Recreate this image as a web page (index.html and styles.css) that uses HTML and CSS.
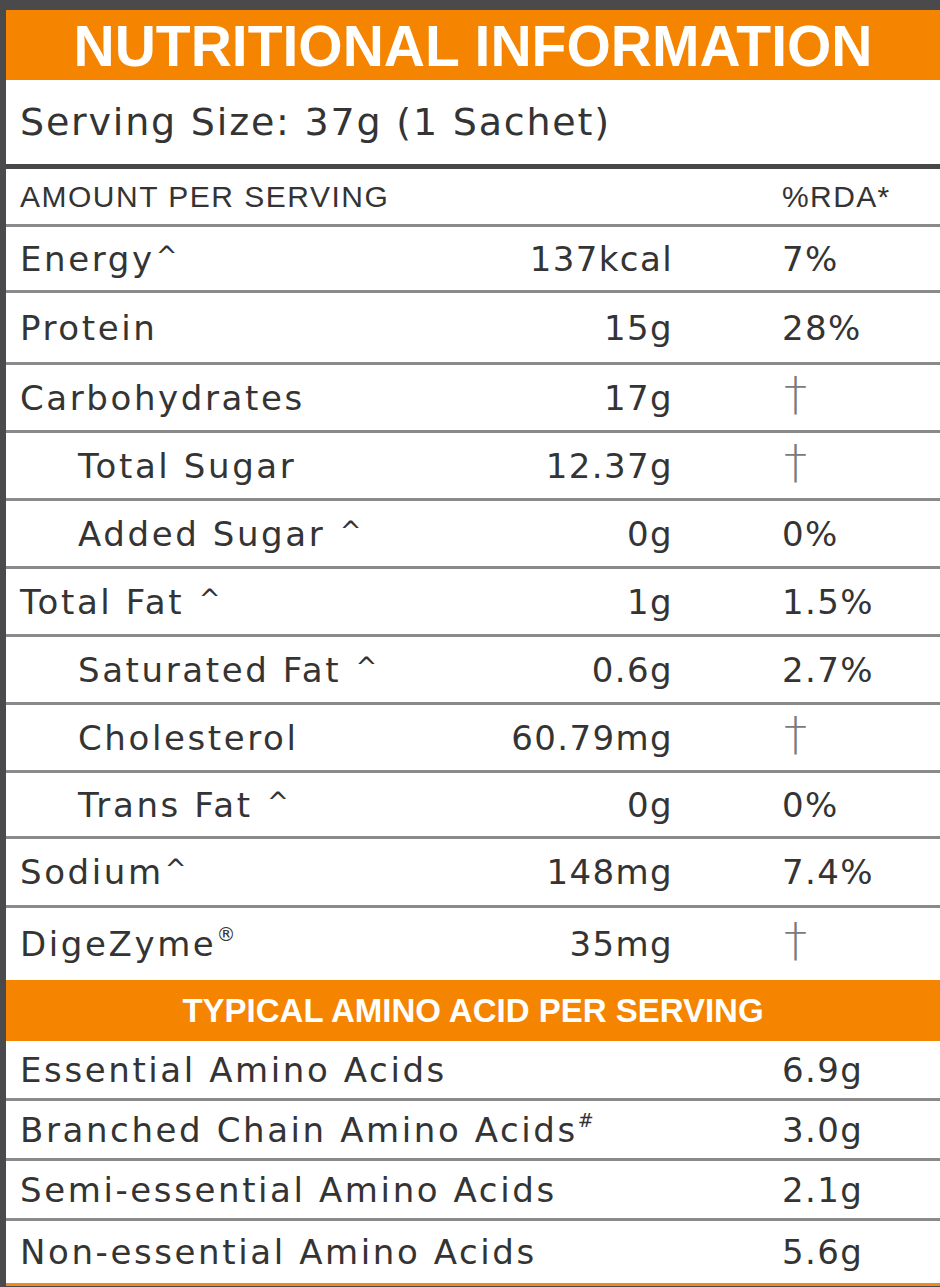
FILE: index.html
```html
<!DOCTYPE html>
<html lang="en">
<head>
<meta charset="utf-8">
<title>Nutritional Information</title>
<link rel="stylesheet" href="styles.css">
</head>
<body>
<div class="panel">
  <h1 class="title">NUTRITIONAL INFORMATION</h1>
  <div class="serving">Serving Size: 37g (1 Sachet)</div>
  <div class="row head">
    <span class="label">AMOUNT PER SERVING</span>
    <span class="value"></span>
    <span class="rda">%RDA*</span>
  </div>
  <div class="row r66">
    <span class="label">Energy<span class="caret">^</span></span>
    <span class="value">137kcal</span>
    <span class="rda">7%</span>
  </div>
  <div class="row r72">
    <span class="label">Protein</span>
    <span class="value">15g</span>
    <span class="rda">28%</span>
  </div>
  <div class="row">
    <span class="label">Carbohydrates</span>
    <span class="value">17g</span>
    <span class="rda"><span class="dagger">†</span></span>
  </div>
  <div class="row">
    <span class="label sub">Total Sugar</span>
    <span class="value">12.37g</span>
    <span class="rda"><span class="dagger">†</span></span>
  </div>
  <div class="row">
    <span class="label sub">Added Sugar <span class="caret">^</span></span>
    <span class="value">0g</span>
    <span class="rda">0%</span>
  </div>
  <div class="row">
    <span class="label">Total Fat <span class="caret">^</span></span>
    <span class="value">1g</span>
    <span class="rda">1.5%</span>
  </div>
  <div class="row">
    <span class="label sub">Saturated Fat <span class="caret">^</span></span>
    <span class="value">0.6g</span>
    <span class="rda">2.7%</span>
  </div>
  <div class="row">
    <span class="label sub">Cholesterol</span>
    <span class="value">60.79mg</span>
    <span class="rda"><span class="dagger">†</span></span>
  </div>
  <div class="row r66">
    <span class="label sub">Trans Fat <span class="caret">^</span></span>
    <span class="value">0g</span>
    <span class="rda">0%</span>
  </div>
  <div class="row r69">
    <span class="label">Sodium<span class="caret">^</span></span>
    <span class="value">148mg</span>
    <span class="rda">7.4%</span>
  </div>
  <div class="row r75">
    <span class="label">DigeZyme<sup class="sup">®</sup></span>
    <span class="value">35mg</span>
    <span class="rda"><span class="dagger">†</span></span>
  </div>
  <div class="band">TYPICAL AMINO ACID PER SERVING</div>
  <div class="amino first">
    <span class="label">Essential Amino Acids</span>
    <span class="rda">6.9g</span>
  </div>
  <div class="amino">
    <span class="label">Branched Chain Amino Acids<sup class="sup">#</sup></span>
    <span class="rda">3.0g</span>
  </div>
  <div class="amino">
    <span class="label">Semi-essential Amino Acids</span>
    <span class="rda">2.1g</span>
  </div>
  <div class="amino last">
    <span class="label">Non-essential Amino Acids</span>
    <span class="rda">5.6g</span>
  </div>
</div>
</body>
</html>
```
FILE: styles.css
```css
html, body {
  margin: 0;
  padding: 0;
}
body {
  background: #4a4a4c;
  width: 940px;
  height: 1287px;
  overflow: hidden;
}
.panel {
  margin: 10px 0 0 6px;
  width: 934px;
  background: #ffffff;
  border-bottom: 3px solid #f08a1c;
  color: #343434;
  font-family: "DejaVu Sans", "Liberation Sans", sans-serif;
}
.title {
  margin: 0;
  height: 70px;
  background: #f58500;
  color: #ffffff;
  font-family: "Liberation Sans", Arial, sans-serif;
  font-weight: 700;
  font-size: 57px;
  line-height: 72px;
  text-align: center;
}
.serving {
  height: 84px;
  padding-left: 14px;
  font-size: 38px;
  line-height: 84px;
  border-bottom: 5px solid #474747;
  letter-spacing: 1.8px;
}
.row {
  display: grid;
  grid-template-columns: 1fr 200px 268px;
  align-items: center;
  height: 65px;
  padding-left: 14px;
  border-top: 3px solid #8a8a8a;
  font-size: 34px;
  letter-spacing: 2.6px;
}
.row.head {
  border-top: none;
  height: 55px;
  font-family: "Liberation Sans", Arial, sans-serif;
  font-size: 30px;
  letter-spacing: 1.5px;
}
.row.r66 { height: 63px; }
.row.r69 { height: 66px; }
.row.r72 { height: 69px; }
.row.r75 { height: 72px; }
.label.sub {
  padding-left: 58px;
}
.value {
  text-align: right;
  letter-spacing: 1.4px;
  margin-right: -1px;
}
.rda {
  padding-left: 110px;
  letter-spacing: 1.4px;
}
.caret {
  font-size: 26px;
  vertical-align: 6px;
  margin-left: 1px;
  letter-spacing: 0;
}
.sup {
  font-size: 19px;
  vertical-align: 15px;
  line-height: 0;
  letter-spacing: 0;
}
.dagger {
  font-family: "DejaVu Sans", sans-serif;
  font-weight: 200;
  color: #7a7a7a;
  font-size: 46px;
  line-height: 0;
  padding-left: 2px;
}
.band {
  height: 61px;
  background: #f58500;
  color: #ffffff;
  font-family: "Liberation Sans", Arial, sans-serif;
  font-weight: 700;
  font-size: 33px;
  line-height: 62px;
  text-align: center;
}
.amino {
  display: grid;
  grid-template-columns: 1fr 158px;
  align-items: center;
  height: 57px;
  padding-left: 14px;
  border-top: 3px solid #8a8a8a;
  font-size: 34px;
  letter-spacing: 2.6px;
}
.amino.first {
  border-top: none;
}
.amino.last {
  height: 62px;
}
.amino .rda {
  padding-left: 0;
}
```
